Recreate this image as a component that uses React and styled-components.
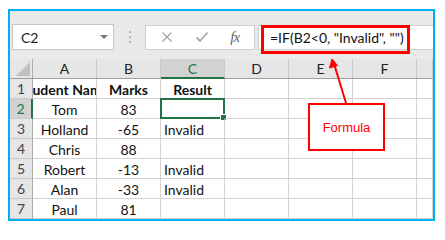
import React from "react";
import styled, { createGlobalStyle } from "styled-components";

const GlobalStyle = createGlobalStyle`
  html, body { margin: 0; padding: 0; background: #ffffff; }
  body { font-family: Lato, "Liberation Sans", sans-serif; }
`;

const Frame = styled.div`
  position: relative;
  margin: 9px 0 0 8px;
  width: 427px;
  height: 212px;
  box-sizing: border-box;
  border: 2px solid #00b0f0;
  background: #e9e9e9;
  overflow: hidden;
`;

const Toolbar = styled.div`
  display: flex;
  align-items: center;
  height: 48px;
  box-sizing: border-box;
  padding: 13px 0 9px 2px;
`;

const NameBox = styled.div`
  display: flex;
  align-items: center;
  justify-content: space-between;
  width: 102px;
  height: 26px;
  box-sizing: border-box;
  border: 1px solid #c6c6c6;
  background: #fff;
  padding: 0 5px 0 8px;
  font-size: 14px;
  color: #222;
`;

const Caret = styled.span`
  width: 0;
  height: 0;
  border-left: 4px solid transparent;
  border-right: 4px solid transparent;
  border-top: 4px solid #777;
`;

const Grip = styled.div`
  width: 31px;
  display: flex;
  flex-direction: column;
  align-items: center;
  gap: 3px;
  span {
    width: 2px;
    height: 2px;
    background: #b5b5b5;
  }
`;

const ButtonsBox = styled.div`
  display: flex;
  align-items: center;
  justify-content: space-around;
  width: 110px;
  height: 25px;
  box-sizing: border-box;
  border: 1px solid #d0d0d0;
  background: #fff;
  padding: 0 4px;
`;

const Fx = styled.span`
  font-family: "Liberation Serif", serif;
  font-style: italic;
  font-size: 15px;
  color: #666;
  letter-spacing: -1px;
`;

const FormulaInput = styled.div`
  flex: 1;
  height: 25px;
  margin-left: 3px;
  box-sizing: border-box;
  border: 1px solid #d0d0d0;
  border-right: none;
  background: #fff;
  display: flex;
  align-items: center;
  padding-left: 11px;
  font-size: 14px;
  color: #111;
  white-space: nowrap;
`;

const Grid = styled.div`
  display: grid;
  grid-template-columns: 23px repeat(6, 64px) 16px;
  grid-auto-rows: 20px;
  background: #fff;
`;

const Corner = styled.div`
  position: relative;
  background: #e6e6e6;
  border-right: 1px solid #ababab;
  border-bottom: 1px solid #9e9e9e;
  box-sizing: border-box;
  display: flex;
  align-items: flex-end;
  justify-content: flex-end;
  padding: 0 2px 2px 0;
`;

const ColHead = styled.div`
  background: ${(p) => (p.$sel ? "#d2d2d2" : "#e6e6e6")};
  border-right: 1px solid #c8c8c8;
  border-bottom: ${(p) => (p.$sel ? "2px solid #217346" : "1px solid #9e9e9e")};
  box-sizing: border-box;
  display: flex;
  align-items: center;
  justify-content: center;
  font-size: 14px;
  color: ${(p) => (p.$sel ? "#217346" : "#222")};
  padding-top: ${(p) => (p.$sel ? "1px" : "0")};
`;

const RowHead = styled.div`
  background: ${(p) => (p.$sel ? "#d2d2d2" : "#e6e6e6")};
  border-right: ${(p) => (p.$sel ? "2px solid #217346" : "1px solid #ababab")};
  border-bottom: 1px solid #c8c8c8;
  box-sizing: border-box;
  display: flex;
  align-items: center;
  justify-content: center;
  font-size: 14px;
  color: ${(p) => (p.$sel ? "#217346" : "#444")};
`;

const Cell = styled.div`
  position: relative;
  border-right: 1px solid #d4d4d4;
  border-bottom: 1px solid #d4d4d4;
  box-sizing: border-box;
  display: flex;
  align-items: center;
  justify-content: ${(p) => (p.$align === "left" ? "flex-start" : "center")};
  padding-left: ${(p) => (p.$align === "left" ? "3px" : "0")};
  padding-top: 1px;
  font-size: 14px;
  font-weight: ${(p) => (p.$bold ? 700 : 400)};
  color: #111;
  white-space: nowrap;
  overflow: hidden;
`;

const SelCell = styled(Cell)`
  overflow: visible;
`;

const Selection = styled.div`
  position: absolute;
  top: -1px;
  left: -1px;
  right: -1px;
  bottom: -1px;
  border: 2px solid #217346;
  pointer-events: none;
`;

const Handle = styled.div`
  position: absolute;
  right: -4px;
  bottom: -4px;
  width: 5px;
  height: 5px;
  background: #217346;
  border: 1px solid #fff;
`;

const RedBox = styled.div`
  position: absolute;
  left: 251px;
  top: 14px;
  width: 149px;
  height: 29px;
  box-sizing: border-box;
  border: 3px solid #ff0000;
  pointer-events: none;
`;

const Callout = styled.div`
  position: absolute;
  left: 298px;
  top: 92px;
  width: 77px;
  height: 48px;
  box-sizing: border-box;
  border: 2px solid #ff0000;
  background: #fff;
  display: flex;
  align-items: center;
  justify-content: center;
  font-family: "Liberation Sans", Arial, sans-serif;
  font-size: 13px;
  color: #ff0000;
`;

const ArrowSvg = styled.svg`
  position: absolute;
  left: 0;
  top: 0;
  pointer-events: none;
`;

const cols = ["A", "B", "C", "D", "E", "F", ""];

const rows = [
  ["Student Name", "Marks", "Result", true],
  ["Tom", "83", ""],
  ["Holland", "-65", "Invalid"],
  ["Chris", "88", ""],
  ["Robert", "-13", "Invalid"],
  ["Alan", "-33", "Invalid"],
  ["Paul", "81", ""],
];

export default function App() {
  return (
    <>
      <GlobalStyle />
      <Frame>
        <Toolbar>
          <NameBox>
            <span>C2</span>
            <Caret />
          </NameBox>
          <Grip>
            <span />
            <span />
            <span />
          </Grip>
          <ButtonsBox>
            <svg width="12" height="12" viewBox="0 0 12 12">
              <path d="M1.5 1.5 L10.5 10.5 M10.5 1.5 L1.5 10.5" stroke="#a6a6a6" strokeWidth="1.3" fill="none" />
            </svg>
            <svg width="14" height="12" viewBox="0 0 14 12">
              <path d="M1.5 6.5 L5 10 L12.5 1.5" stroke="#a6a6a6" strokeWidth="1.8" fill="none" />
            </svg>
            <Fx>fx</Fx>
          </ButtonsBox>
          <FormulaInput>=IF(B2&lt;0, "Invalid", "")</FormulaInput>
        </Toolbar>
        <Grid>
          <Corner>
            <svg width="14" height="14" viewBox="0 0 14 14">
              <path d="M14 0 L14 14 L0 14 Z" fill="#bfbfbf" />
            </svg>
          </Corner>
          {cols.map((c, i) => (
            <ColHead key={i} $sel={c === "C"}>
              {c}
            </ColHead>
          ))}
          {rows.map((r, i) => {
            const n = i + 1;
            const bold = !!r[3];
            return (
              <React.Fragment key={n}>
                <RowHead $sel={n === 2}>{n}</RowHead>
                <Cell $bold={bold}>{r[0]}</Cell>
                <Cell $bold={bold}>{r[1]}</Cell>
                {n === 2 ? (
                  <SelCell>
                    <Selection>
                      <Handle />
                    </Selection>
                  </SelCell>
                ) : (
                  <Cell $bold={bold} $align={bold ? "center" : "left"}>
                    {r[2]}
                  </Cell>
                )}
                <Cell />
                <Cell />
                <Cell />
                <Cell />
              </React.Fragment>
            );
          })}
        </Grid>
        <RedBox />
        <ArrowSvg width="423" height="208" viewBox="0 0 423 208">
          <line x1="323.5" y1="51" x2="336" y2="92" stroke="#ff0000" strokeWidth="2" />
          <path d="M322 48 L319.5 57 L327.5 54.5 Z" fill="#ff0000" stroke="#ff0000" strokeWidth="1" />
        </ArrowSvg>
        <Callout>Formula</Callout>
      </Frame>
    </>
  );
}
